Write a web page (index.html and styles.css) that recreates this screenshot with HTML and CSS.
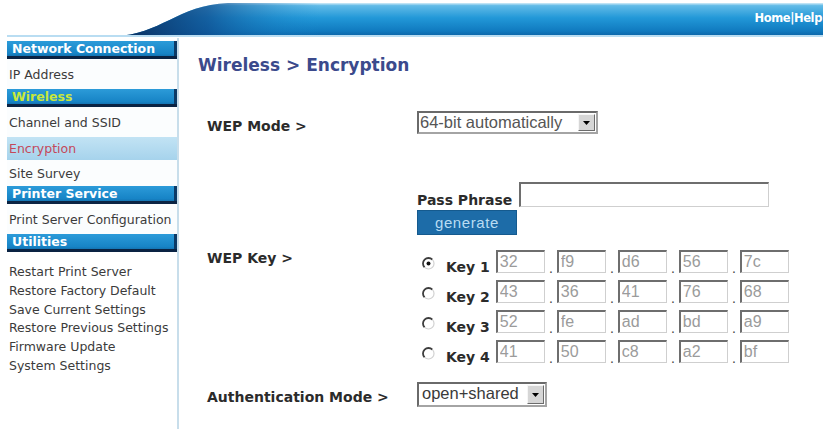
FILE: index.html
```html
<!DOCTYPE html>
<html lang="en">
<head>
<meta charset="utf-8">
<title>Wireless &gt; Encryption</title>
<link rel="stylesheet" href="styles.css">
</head>
<body>
<header class="banner">
  <svg class="banner-art" viewBox="0 0 823 38" preserveAspectRatio="none" aria-hidden="true">
    <defs>
      <linearGradient id="bandV" x1="0" y1="0" x2="0" y2="1">
        <stop offset="0" stop-color="#d3ecf8"/>
        <stop offset="0.08" stop-color="#62bbe7"/>
        <stop offset="0.45" stop-color="#2298d8"/>
        <stop offset="0.85" stop-color="#107abf"/>
        <stop offset="1" stop-color="#0b64a6"/>
      </linearGradient>
      <linearGradient id="swoosh" gradientUnits="userSpaceOnUse" x1="115" y1="0" x2="320" y2="0">
        <stop offset="0" stop-color="#0a2c5a" stop-opacity="1"/>
        <stop offset="0.45" stop-color="#0f4d8e" stop-opacity="0.75"/>
        <stop offset="1" stop-color="#1a8bd0" stop-opacity="0"/>
      </linearGradient>
    </defs>
    <path d="M115 36 C160 35 178 5 228 3 L823 3 L823 35 Z" fill="url(#bandV)"/>
    <path d="M115 36 C160 35 178 5 228 3 L823 3 L823 35 Z" fill="url(#swoosh)"/>
    <rect x="7" y="35" width="816" height="2" fill="#b9ddf2"/>
  </svg>
  <nav class="toplinks"><a href="#">Home</a>|<a href="#">Help</a></nav>
</header>

<div class="layout">
  <aside class="sidebar">
    <div class="sb-head">Network Connection</div>
    <a class="sb-item sb-tall" href="#">IP Address</a>
    <div class="sb-head sb-head-wireless">Wireless</div>
    <a class="sb-item sb-tall" href="#">Channel and SSID</a>
    <a class="sb-item sb-short sb-active" href="#">Encryption</a>
    <a class="sb-item" href="#">Site Survey</a>
    <div class="sb-head">Printer Service</div>
    <a class="sb-item sb-tall" href="#">Print Server Configuration</a>
    <div class="sb-head">Utilities</div>
    <div class="sb-list">
      <a class="sb-util" href="#">Restart Print Server</a>
      <a class="sb-util" href="#">Restore Factory Default</a>
      <a class="sb-util" href="#">Save Current Settings</a>
      <a class="sb-util" href="#">Restore Previous Settings</a>
      <a class="sb-util" href="#">Firmware Update</a>
      <a class="sb-util" href="#">System Settings</a>
    </div>
  </aside>

  <main class="content">
    <h1 class="title">Wireless &gt; Encryption</h1>
    <div class="form">
      <div class="row row-mode">
        <div class="label label-mid">WEP Mode &gt;</div>
        <div class="select select-wide">
          <span class="sel-text">64-bit automatically</span>
          <span class="sel-btn"><svg viewBox="0 0 7 4" width="7" height="4"><path d="M0 0H7L3.5 4Z" fill="#000"/></svg></span>
        </div>
      </div>

      <div class="row row-pass">
        <div class="label"></div>
        <div class="pass-field">
          <div class="pass-line">
            <span class="pass-label">Pass Phrase</span>
            <input class="pass-input" type="text" value="">
          </div>
          <button class="btn" type="button">generate</button>
        </div>
      </div>

      <div class="row row-keys">
        <div class="label">WEP Key &gt;</div>
        <div class="keys">
          <div class="key-row">
            <svg class="radio" viewBox="0 0 13 13" width="13" height="13"><circle cx="6.5" cy="6.5" r="5.5" fill="#fff"/><path d="M10.4 2.6A5.5 5.5 0 0 0 2.6 10.4" fill="none" stroke="#3c3c3c" stroke-width="1.8"/><path d="M10.4 2.6A5.5 5.5 0 0 1 2.6 10.4" fill="none" stroke="#d2d2d2" stroke-width="1.2"/><circle cx="6.5" cy="6.5" r="2" fill="#111"/></svg>
            <span class="key-label">Key 1</span>
            <input class="hex" type="text" value="32" readonly><span class="sep">.</span><input class="hex" type="text" value="f9" readonly><span class="sep">.</span><input class="hex" type="text" value="d6" readonly><span class="sep">.</span><input class="hex" type="text" value="56" readonly><span class="sep">.</span><input class="hex" type="text" value="7c" readonly>
          </div>
          <div class="key-row">
            <svg class="radio" viewBox="0 0 13 13" width="13" height="13"><circle cx="6.5" cy="6.5" r="5.5" fill="#fff"/><path d="M10.4 2.6A5.5 5.5 0 0 0 2.6 10.4" fill="none" stroke="#3c3c3c" stroke-width="1.8"/><path d="M10.4 2.6A5.5 5.5 0 0 1 2.6 10.4" fill="none" stroke="#d2d2d2" stroke-width="1.2"/></svg>
            <span class="key-label">Key 2</span>
            <input class="hex" type="text" value="43" readonly><span class="sep">.</span><input class="hex" type="text" value="36" readonly><span class="sep">.</span><input class="hex" type="text" value="41" readonly><span class="sep">.</span><input class="hex" type="text" value="76" readonly><span class="sep">.</span><input class="hex" type="text" value="68" readonly>
          </div>
          <div class="key-row">
            <svg class="radio" viewBox="0 0 13 13" width="13" height="13"><circle cx="6.5" cy="6.5" r="5.5" fill="#fff"/><path d="M10.4 2.6A5.5 5.5 0 0 0 2.6 10.4" fill="none" stroke="#3c3c3c" stroke-width="1.8"/><path d="M10.4 2.6A5.5 5.5 0 0 1 2.6 10.4" fill="none" stroke="#d2d2d2" stroke-width="1.2"/></svg>
            <span class="key-label">Key 3</span>
            <input class="hex" type="text" value="52" readonly><span class="sep">.</span><input class="hex" type="text" value="fe" readonly><span class="sep">.</span><input class="hex" type="text" value="ad" readonly><span class="sep">.</span><input class="hex" type="text" value="bd" readonly><span class="sep">.</span><input class="hex" type="text" value="a9" readonly>
          </div>
          <div class="key-row">
            <svg class="radio" viewBox="0 0 13 13" width="13" height="13"><circle cx="6.5" cy="6.5" r="5.5" fill="#fff"/><path d="M10.4 2.6A5.5 5.5 0 0 0 2.6 10.4" fill="none" stroke="#3c3c3c" stroke-width="1.8"/><path d="M10.4 2.6A5.5 5.5 0 0 1 2.6 10.4" fill="none" stroke="#d2d2d2" stroke-width="1.2"/></svg>
            <span class="key-label">Key 4</span>
            <input class="hex" type="text" value="41" readonly><span class="sep">.</span><input class="hex" type="text" value="50" readonly><span class="sep">.</span><input class="hex" type="text" value="c8" readonly><span class="sep">.</span><input class="hex" type="text" value="a2" readonly><span class="sep">.</span><input class="hex" type="text" value="bf" readonly>
          </div>
        </div>
      </div>

      <div class="row row-auth">
        <div class="label label-mid">Authentication Mode &gt;</div>
        <div class="select select-auth">
          <span class="sel-text sel-dark">open+shared</span>
          <span class="sel-btn"><svg viewBox="0 0 7 4" width="7" height="4"><path d="M0 0H7L3.5 4Z" fill="#000"/></svg></span>
        </div>
      </div>
    </div>
  </main>
</div>
</body>
</html>
```

FILE: styles.css
```css
* { box-sizing: border-box; }

html, body {
  margin: 0;
  padding: 0;
  background: #fff;
}

body {
  width: 823px;
  height: 429px;
  overflow: hidden;
  font-family: "DejaVu Sans", Verdana, sans-serif;
}

/* ---------- banner ---------- */
.banner {
  position: relative;
  height: 38px;
  overflow: hidden;
  display: flex;
  justify-content: flex-end;
  align-items: center;
}

.banner-art {
  position: absolute;
  left: 0;
  top: 0;
  width: 823px;
  height: 38px;
}

.toplinks {
  position: relative;
  margin-right: 1px;
  padding-bottom: 3px;
  font: bold 11.5px/14px "DejaVu Sans", sans-serif;
  letter-spacing: -0.4px;
  color: #fff;
}

.toplinks a {
  color: #fff;
  text-decoration: none;
}

/* ---------- layout ---------- */
.layout {
  display: flex;
}

.sidebar {
  flex: none;
  width: 172px;
  margin-left: 7px;
  min-height: 391px;
  padding-top: 3px;
  border-right: 2px solid #c8deeb;
  display: flex;
  flex-direction: column;
}

.sb-head {
  height: 18px;
  padding-left: 5px;
  font: bold 12.5px/15px "DejaVu Sans", sans-serif;
  color: #fff;
  white-space: nowrap;
  background: linear-gradient(#2c9bd9, #1784c6 70%, #0f609b);
  box-shadow: inset 0 -3px 0 #0a2343, inset -3px 0 0 #0c3a66;
}

.sb-head-wireless {
  color: #c8e83a;
}

.sb-item {
  display: flex;
  align-items: center;
  height: 26px;
  padding-left: 2px;
  font-size: 12.5px;
  color: #3b3b3b;
  text-decoration: none;
  white-space: nowrap;
  background: #fbfdfe;
}

.sb-tall {
  height: 30px;
}

.sb-short {
  height: 23px;
}

.sb-active {
  background: linear-gradient(#c2e3f4, #a6d3ec);
  color: #c4485a;
}

.sb-list {
  padding-top: 10.5px;
  display: flex;
  flex-direction: column;
}

.sb-util {
  display: flex;
  align-items: center;
  height: 18.7px;
  padding-left: 2px;
  font-size: 12.5px;
  color: #3b3b3b;
  text-decoration: none;
  white-space: nowrap;
}

/* ---------- content ---------- */
.content {
  flex: 1;
  padding: 17px 0 0 19px;
}

.title {
  margin: 0;
  font: bold 17px/20px "DejaVu Sans", sans-serif;
  color: #3b4a8c;
}

.form {
  margin-left: 9px;
}

.row {
  display: flex;
  align-items: flex-start;
}

.label {
  flex: none;
  width: 210px;
  font: bold 14px/16px "DejaVu Sans", sans-serif;
  color: #2b2b2b;
}

.label-mid {
  padding-top: 7px;
}

.row-mode { margin-top: 36px; }
.row-pass { margin-top: 48px; }
.row-keys { margin-top: 15px; }
.row-auth { margin-top: 19px; }

/* select-like control */
.select {
  display: flex;
  align-items: stretch;
  border-style: solid;
  border-width: 2px;
  border-color: #6a6a6a #a4a4a4 #a4a4a4 #6a6a6a;
  background: #fff;
}

.select-wide {
  width: 181px;
  height: 23px;
}

.select-auth {
  width: 130px;
  height: 25px;
}

.sel-text {
  flex: 1;
  padding-left: 1px;
  font: 16.5px/19px "Liberation Sans", Arial, sans-serif;
  color: #555;
  white-space: nowrap;
  overflow: hidden;
}

.sel-dark {
  color: #3a3a3a;
  padding-left: 3px;
}

.sel-btn {
  flex: none;
  width: 17px;
  margin: 1px;
  display: flex;
  align-items: center;
  justify-content: center;
  background: #d6d6d6;
  border: 1px solid;
  border-color: #f6f6f6 #6c6c6c #6c6c6c #f6f6f6;
}

/* pass phrase */
.pass-field {
  display: flex;
  flex-direction: column;
  align-items: flex-start;
}

.pass-line {
  display: flex;
  align-items: flex-end;
  gap: 7px;
}

.pass-label {
  font: bold 14px/16px "DejaVu Sans", sans-serif;
  color: #2b2b2b;
  margin-bottom: -1px;
}

.pass-input {
  width: 250px;
  height: 25px;
  margin: 0;
  padding: 0 2px;
  border-style: solid;
  border-width: 2px 1px 1px 2px;
  border-color: #6e6e6e #cfcfcf #cfcfcf #6e6e6e;
  font: 16px "Liberation Sans", Arial, sans-serif;
  outline: none;
}

.btn {
  margin: 3px 0 0;
  width: 100px;
  height: 25px;
  padding: 0;
  background: #1d6ca8;
  border: 1px solid #155a8e;
  color: #b9dcf3;
  font: 15px "Liberation Sans", Arial, sans-serif;
  letter-spacing: 0.6px;
}

/* keys */
.keys {
  display: flex;
  flex-direction: column;
  gap: 7px;
}

.key-row {
  display: flex;
  align-items: center;
  height: 23px;
}

.radio {
  flex: none;
  margin: 3px 0 0 5px;
}

.key-label {
  align-self: flex-end;
  margin: 0 6px -2px 11px;
  font: bold 14px/16px "DejaVu Sans", sans-serif;
  color: #2b2b2b;
}

.hex {
  flex: none;
  width: 49px;
  height: 23px;
  margin: 0;
  padding: 0 0 0 2px;
  border-style: solid;
  border-width: 2px 1px 1px 2px;
  border-color: #6e6e6e #cfcfcf #cfcfcf #6e6e6e;
  background: #fff;
  font: 16px "Liberation Sans", Arial, sans-serif;
  color: #9b9b9b;
  outline: none;
}

.sep {
  flex: none;
  width: 12px;
  align-self: flex-end;
  text-align: center;
  font: 14px/14px "Liberation Sans", Arial, sans-serif;
  color: #444;
  margin-bottom: -2px;
}
```
